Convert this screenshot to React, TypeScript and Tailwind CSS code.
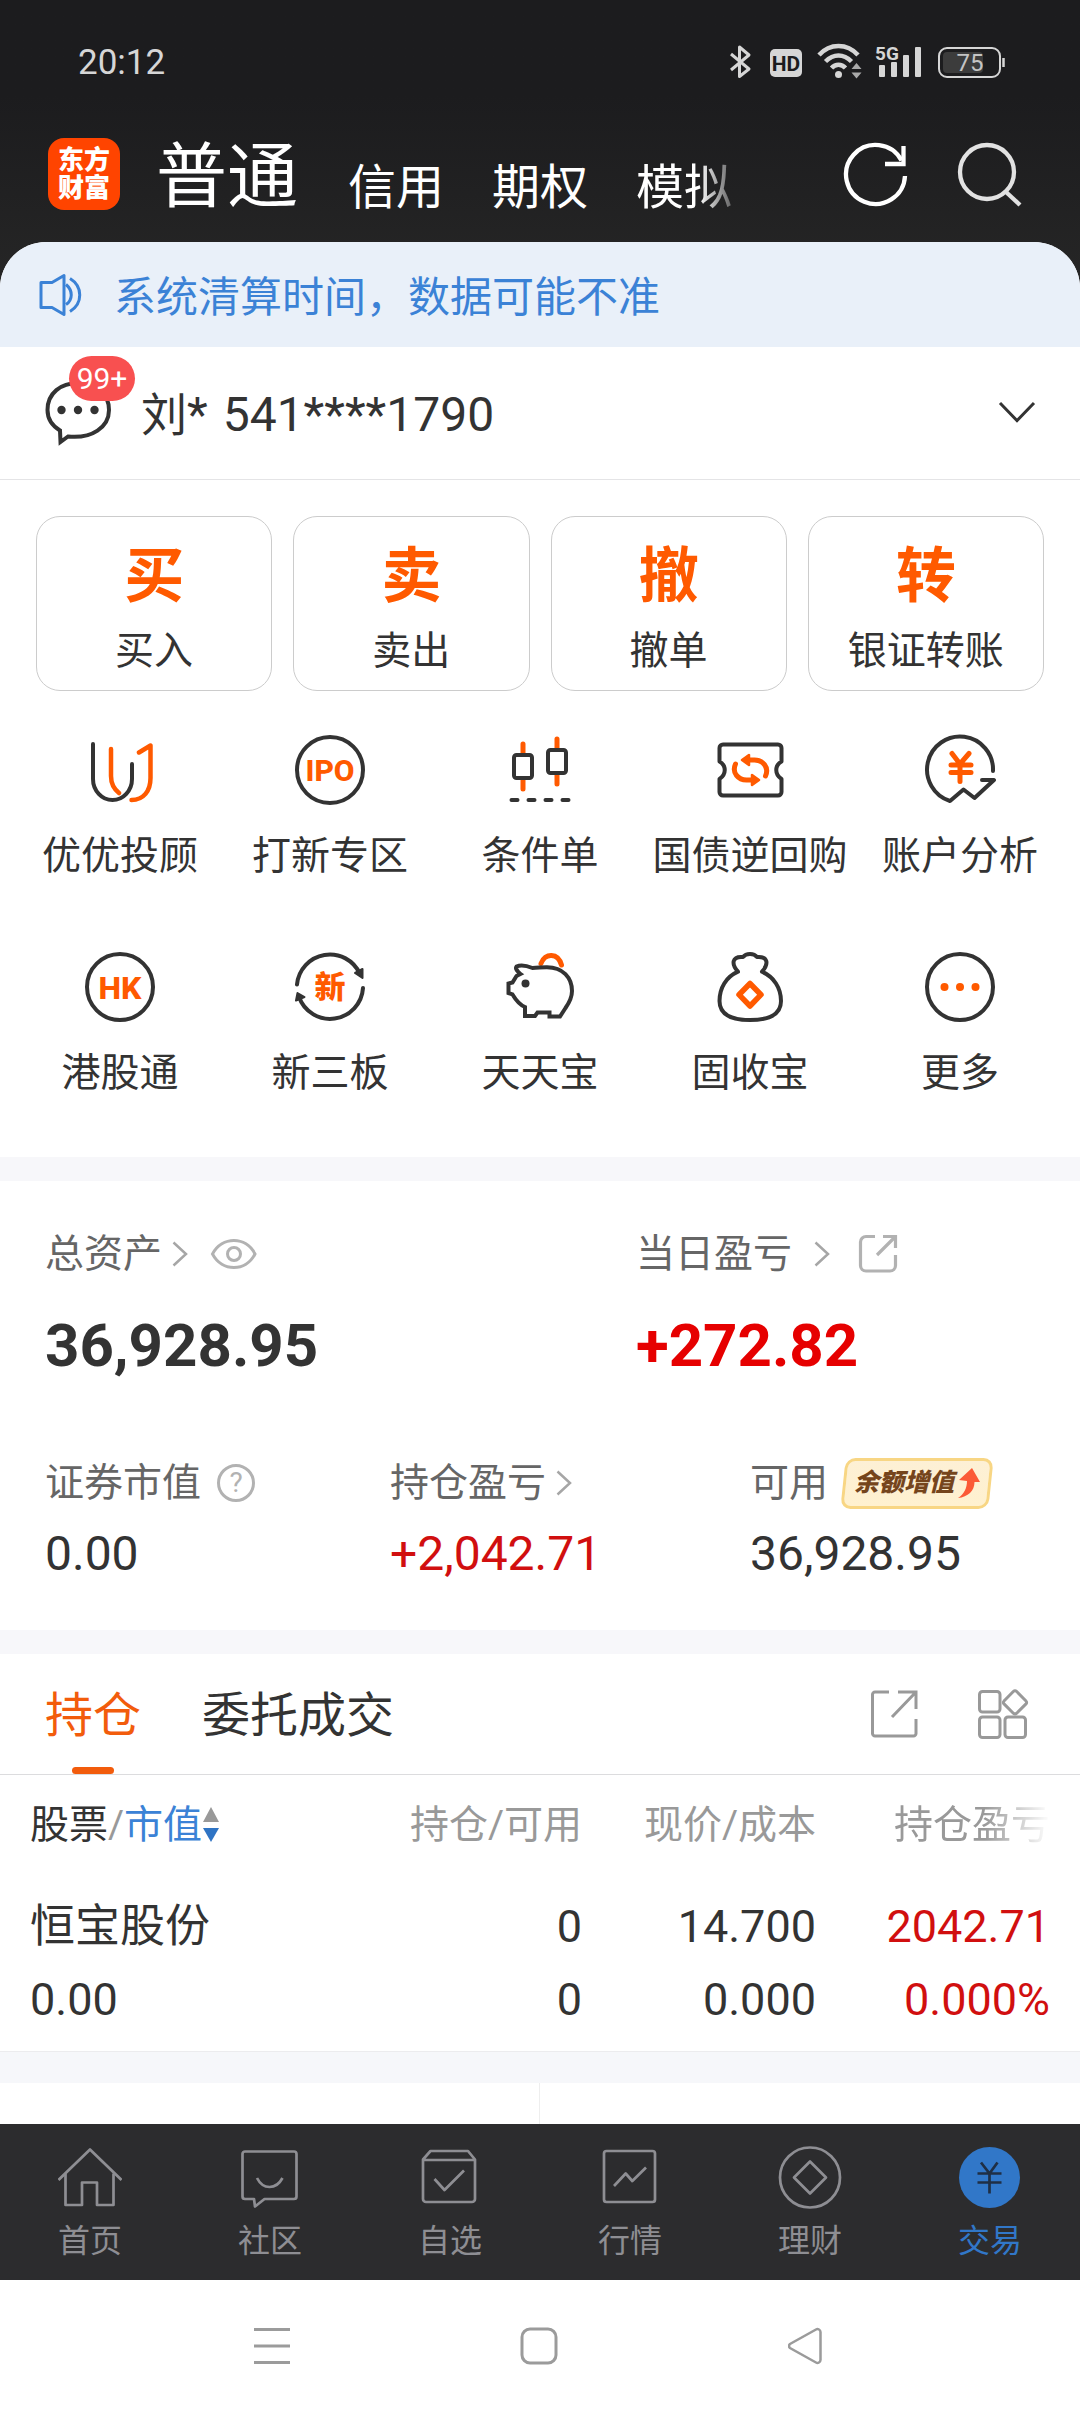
import { useState, type ReactNode } from "react";

const DARK = "#333333";
const ORANGE = "#ff5a00";

const quotes = [
  { mark: "买", label: "买入" },
  { mark: "卖", label: "卖出" },
  { mark: "撤", label: "撤单" },
  { mark: "转", label: "银证转账" },
];

function GridIcon({ children }: { children: ReactNode }) {
  return (
    <svg
      viewBox="0 0 72 72"
      className="size-[72px]"
      fill="none"
      stroke={DARK}
      strokeWidth="4"
      strokeLinecap="round"
      strokeLinejoin="round"
      aria-hidden="true"
    >
      {children}
    </svg>
  );
}

const services: { label: string; icon: ReactNode }[] = [
  {
    label: "优优投顾",
    icon: (
      <GridIcon>
        <path d="M9 10V45a19.5 21 0 0 0 39 0V30" />
        <g stroke={ORANGE} strokeWidth="4.5">
          <path d="M27 15V42c0 7 3 13 8 17" />
          <path d="M55 18.5l11.5-7V44c0 13-7 22-19 22" />
        </g>
      </GridIcon>
    ),
  },
  {
    label: "打新专区",
    icon: (
      <GridIcon>
        <circle cx="36" cy="36" r="33" />
        <text
          x="36"
          y="46.5"
          textAnchor="middle"
          fontSize="30"
          fontWeight="800"
          fill={ORANGE}
          stroke="none"
        >
          IPO
        </text>
      </GridIcon>
    ),
  },
  {
    label: "条件单",
    icon: (
      <GridIcon>
        <g stroke={ORANGE} strokeWidth="5">
          <path d="M19 10v10M19 46v9M53 5v10M53 40v10" />
        </g>
        <rect x="10" y="21" width="18" height="23" rx="2.5" fill="#fff" />
        <rect x="44" y="16" width="18" height="23" rx="2.5" fill="#fff" />
        <path d="M7.500 66h6M24.500 66h6M41.500 66h6M58.500 66h6" />
      </GridIcon>
    ),
  },
  {
    label: "国债逆回购",
    icon: (
      <GridIcon>
        <path d="M9 10.500H64a3.500 3.500 0 0 1 3.500 3.500V27.500c-7 4-7 13 0 17.500V58a3.500 3.500 0 0 1-3.500 3.500H9A3.500 3.500 0 0 1 5.500 58V45c7-4.500 7-13.500 0-17.500V14A3.500 3.500 0 0 1 9 10.500z" />
        <g stroke={ORANGE} strokeWidth="5">
          <path d="M21.500 30c-4 9 3 16 11 16h5M51.500 42c4-9-3-16-11-16h-5" />
          <path
            d="M38 41v10l7-5zM35 21v10l-7-5z"
            fill={ORANGE}
            strokeWidth="2.5"
          />
        </g>
      </GridIcon>
    ),
  },
  {
    label: "账户分析",
    icon: (
      <GridIcon>
        <path d="M69 37A33 33 0 1 0 26 67L39.500 55.500 50.500 64 70 46H58" />
        <path
          d="M28 19.500l8 10.500 9-10.500M36 31v16.500M27 31h20M27 38.500h20"
          stroke={ORANGE}
          strokeWidth="5"
        />
      </GridIcon>
    ),
  },
  {
    label: "港股通",
    icon: (
      <GridIcon>
        <circle cx="36" cy="36" r="33" />
        <text
          x="36"
          y="47.5"
          textAnchor="middle"
          fontSize="32"
          fontWeight="800"
          fill={ORANGE}
          stroke="none"
        >
          HK
        </text>
      </GridIcon>
    ),
  },
  {
    label: "新三板",
    icon: (
      <GridIcon>
        <path d="M3 33.500A33 33 0 0 1 66 23M69 37A33 33 0 0 1 5 46" />
        <path
          d="M61 22l7.500-4V27zM3.500 42l7 4L2 49.500z"
          fill={DARK}
          strokeWidth="2"
        />
        <text
          x="36"
          y="47"
          textAnchor="middle"
          fontSize="31"
          fontWeight="900"
          fill={ORANGE}
          stroke="none"
        >
          新
        </text>
      </GridIcon>
    ),
  },
  {
    label: "天天宝",
    icon: (
      <GridIcon>
        <path
          d="M37 12.500c4-11 17-11 20.500 1.500"
          stroke={ORANGE}
          strokeWidth="5"
        />
        <path
          d="M16.500 23c-4-3-5-6-4-7.500 4-2 10-1 16 1.500 5 0 9-.8 14-.8C59 16 68 27 68 40c0 6-3 12-6.500 17L56 65.500H45.500v-4h-12L31 65H21v-9c-5-2-8-5-12.500-12.500L4.500 42V32.500l4-1 4-6.500z"
          strokeLinejoin="miter"
        />
        <circle cx="21.500" cy="32.500" r="4" fill={DARK} stroke="none" />
      </GridIcon>
    ),
  },
  {
    label: "固收宝",
    icon: (
      <GridIcon>
        <path d="M24 20.700C17 13 18 5 29 6c3-4 11-4 14 0 11-1 12 7 5 14.700C60 26 67 37 67 50 67 62 58 69 36 69S5.500 62 5.500 50C5.500 37 12 26 24 20.700z" />
        <path
          d="M36 32.500L47 43.700 36 55 25 43.700z"
          stroke={ORANGE}
          strokeWidth="5.5"
        />
      </GridIcon>
    ),
  },
  {
    label: "更多",
    icon: (
      <GridIcon>
        <circle cx="36" cy="36" r="33" />
        <g fill={ORANGE} stroke="none">
          <circle cx="20.500" cy="36" r="4" />
          <circle cx="36" cy="36" r="4" />
          <circle cx="51.500" cy="36" r="4" />
        </g>
      </GridIcon>
    ),
  },
];

function NavIcon({ children }: { children: ReactNode }) {
  return (
    <svg
      viewBox="0 0 64 64"
      className="size-16"
      fill="none"
      stroke="currentColor"
      strokeWidth="2.7"
      strokeLinejoin="round"
      aria-hidden="true"
    >
      {children}
    </svg>
  );
}

const navItems: { label: string; active?: boolean; icon: ReactNode }[] = [
  {
    label: "首页",
    icon: (
      <NavIcon>
        <path d="M.500 35L32 4.500 63.500 35" />
        <path d="M7.500 28.500V60H24V37.500H39V60H55.500V28.500" />
      </NavIcon>
    ),
  },
  {
    label: "社区",
    icon: (
      <NavIcon>
        <path d="M7 6.500H56a2.500 2.500 0 0 1 2.500 2.500V51.500A2.500 2.500 0 0 1 56 54H26.500L17 61.500 16 54H7a2.500 2.500 0 0 1-2.500-2.500V9A2.500 2.500 0 0 1 7 6.500z" />
        <path d="M19 33c6 12 19 12 25.500 0" />
      </NavIcon>
    ),
  },
  {
    label: "自选",
    icon: (
      <NavIcon>
        <path d="M5 14.500L12.500 6H50l7 8.500V54a3 3 0 0 1-3 3H8a3 3 0 0 1-3-3zM5 15H57" />
        <path d="M16.500 34L26.500 45 46 25.500" />
      </NavIcon>
    ),
  },
  {
    label: "行情",
    icon: (
      <NavIcon>
        <rect x="6" y="6" width="51" height="51" rx="2.5" />
        <path d="M16 41L27.700 28.500 34.300 36 48 22.500" />
      </NavIcon>
    ),
  },
  {
    label: "理财",
    icon: (
      <NavIcon>
        <circle cx="32" cy="32.500" r="30" />
        <path d="M32 16.500L48 32.500 32 48.500 16 32.500z" />
      </NavIcon>
    ),
  },
  {
    label: "交易",
    active: true,
    icon: (
      <NavIcon>
        <circle cx="31.500" cy="32.500" r="30.500" fill="currentColor" stroke="none" />
        <path
          d="M23 17.500l8.500 11 8-11M31.500 28V48.500M19.500 28.500h24M19.500 37.500h24"
          stroke="#1f2f45"
        />
      </NavIcon>
    ),
  },
];

function StatusBar() {
  return (
    <div className="flex h-[106px] items-center justify-between pt-[18px] pr-[74px] pl-[78px] text-[#d6d6d6]">
      <span className="pt-0.5 text-[35px] leading-10">20:12</span>
      <svg
        viewBox="0 0 278 38"
        className="h-[38px] w-[278px]"
        fill="none"
        stroke="#d6d6d6"
        aria-hidden="true"
      >
        <path
          d="M3 11L21 26l-9.500 7.500V4L21 12 3 27"
          strokeWidth="3"
          strokeLinejoin="round"
        />
        <rect x="42" y="6" width="32" height="28" rx="5" fill="#d6d6d6" stroke="none" />
        <text x="58" y="28" textAnchor="middle" fontSize="21" fontWeight="700" fill="#1c1c1e" stroke="none">
          HD
        </text>
        <g strokeWidth="4.5">
          <path d="M91 12c11-12 28-12 39 0M97.500 18.500c8-8 18-8 26 0M103.500 25c4-4.500 10-4.500 14 0" />
        </g>
        <circle cx="110.500" cy="31.500" r="3.500" fill="#d6d6d6" stroke="none" />
        <path d="M123.500 26l5-6 5 6zM123.500 29.500l5 6 5-6z" fill="#a9a9a9" stroke="none" />
        <text x="159" y="17" textAnchor="middle" fontSize="19" fontWeight="700" fill="#d6d6d6" stroke="none">
          5G
        </text>
        <g fill="#d6d6d6" stroke="none">
          <rect x="151" y="22" width="6" height="12" rx="1" />
          <rect x="163" y="19" width="6" height="15" rx="1" />
          <rect x="175" y="12" width="6" height="22" rx="1" />
          <rect x="187" y="4" width="6" height="30" rx="1" />
        </g>
        <rect x="211" y="5" width="61" height="29" rx="8" strokeWidth="2" />
        <rect x="215" y="9" width="40" height="21" rx="4" fill="#3c3c3c" stroke="none" />
        <path d="M275.500 15v9" strokeWidth="2.5" />
        <text x="242" y="28" textAnchor="middle" fontSize="24" fill="#c4c4c4" stroke="none">
          75
        </text>
      </svg>
    </div>
  );
}

function Header() {
  return (
    <header className="flex h-[136px] items-center pr-[54px] pl-12 text-white">
      <a
        href="#home"
        className="flex size-[72px] flex-col items-center justify-center rounded-2xl bg-[#ff4400] text-[26px] leading-7 font-black"
      >
        <span>东方</span>
        <span>财富</span>
      </a>
      <nav className="mt-1.5 ml-9 flex flex-1 items-end gap-12">
        <a href="#normal" className="mr-0.5 text-[71px] leading-[72px]">
          普通
        </a>
        <a href="#credit" className="text-[48px] leading-[50px]">
          信用
        </a>
        <a href="#option" className="text-[48px] leading-[50px]">
          期权
        </a>
        <a
          href="#mock"
          className="text-[48px] leading-[50px] [mask-image:linear-gradient(to_right,black_65%,transparent_115%)]"
        >
          模拟
        </a>
      </nav>
      <div className="flex gap-11 pt-px">
        <button aria-label="刷新">
          <svg viewBox="0 0 70 70" className="size-[70px]" fill="none" stroke="currentColor" strokeWidth="4.3">
            <path d="M63 36A29.500 29.500 0 1 1 59.500 20.500" />
            <path d="M61.500 6V24H43" />
          </svg>
        </button>
        <button aria-label="搜索" className="text-[#e2e2e2]">
          <svg viewBox="0 0 70 70" className="size-[70px]" fill="none" stroke="currentColor" strokeWidth="4.3">
            <circle cx="31" cy="32" r="27" />
            <path d="M50 52L64 65" />
          </svg>
        </button>
      </div>
    </header>
  );
}

function Notice() {
  return (
    <div className="flex h-[105px] items-center gap-[30px] bg-[#e9f0f9] pl-[38px] text-[#3b82d6]">
      <svg viewBox="0 0 46 48" className="h-12 w-[46px]" fill="none" stroke="currentColor" strokeWidth="3" strokeLinejoin="round" aria-hidden="true">
        <path d="M3 11.500H14L26 4.500V43.500L14 36.500H3z" />
        <path d="M28 13.500c7 6 7 15 0 20M32 7.500c13 8 13 25 0 33" />
      </svg>
      <p className="pt-1.5 text-[42px] leading-[50px]">系统清算时间，数据可能不准</p>
    </div>
  );
}

function Account() {
  return (
    <div className="flex h-[133px] items-center border-b border-[#e4e4e6] pr-[44px] pl-[42px] text-[#333]">
      <button aria-label="消息" className="relative">
        <svg viewBox="0 0 72 68" className="h-[68px] w-[72px]" fill="none" stroke="currentColor" strokeWidth="4" aria-hidden="true">
          <path d="M18 51.500C9 46 5.500 39 5.500 31 5.500 14 19 4 36 4s31 10 31 27-17 29-41 26.500L18.500 63z" />
          <g fill="currentColor" stroke="none">
            <circle cx="19.500" cy="31" r="4.2" />
            <circle cx="36" cy="31" r="4.2" />
            <circle cx="52.500" cy="31" r="4.2" />
          </g>
        </svg>
        <span className="absolute -top-[23px] left-[27px] flex h-[45px] w-[66px] items-center justify-center rounded-full bg-[#f85050] text-[30px] leading-10 text-white">
          99+
        </span>
      </button>
      <div className="ml-[27px] flex flex-1 items-baseline gap-[15px] pt-1 text-[48px] leading-[50px]">
        <span>
          <span className="text-[46px]">刘</span>*
        </span>
        <span>541****1790</span>
      </div>
      <button aria-label="切换账户">
        <svg viewBox="0 0 38 24" className="h-6 w-[38px]" fill="none" stroke="currentColor" strokeWidth="3">
          <path d="M2 2L19 19.500 36 2" />
        </svg>
      </button>
    </div>
  );
}

function Arrow() {
  return (
    <svg viewBox="0 0 16 26" className="h-[26px] w-4" fill="none" stroke="#a6a6a6" strokeWidth="2.5" aria-hidden="true">
      <path d="M1.500 1.500L14 13 1.500 24.500" />
    </svg>
  );
}

function Assets() {
  return (
    <section className="bg-white pt-[53px] pb-[51px] pl-[45px] text-[#333]">
      <div className="grid grid-cols-[591fr_444fr]">
        <div>
          <div className="flex h-10 items-center text-[39px] leading-10 text-[#666]">
            <a href="#assets" className="flex items-center gap-[10px]">
              总资产
              <Arrow />
            </a>
            <button aria-label="隐藏金额" className="ml-[22px]">
              <svg viewBox="0 0 48 32" className="h-8 w-12" fill="none" stroke="#b2b2b2" strokeWidth="3">
                <path d="M2.500 16C12-2 36-2 45 16 36 34 12 34 2.500 16z" />
                <circle cx="24" cy="16" r="6.5" />
              </svg>
            </button>
          </div>
          <p className="mt-[42px] text-[60px] leading-[60px] font-bold">36,928.95</p>
        </div>
        <div>
          <div className="flex h-10 items-center text-[39px] leading-10 text-[#666]">
            <a href="#today" className="flex items-center gap-[22px]">
              当日盈亏
              <Arrow />
            </a>
            <button aria-label="分享" className="ml-7">
              <svg viewBox="0 0 40 40" className="size-10" fill="none" stroke="#b2b2b2" strokeWidth="3.2">
                <path d="M17 2.500H8A5.500 5.500 0 0 0 2.500 8V31.500A5.500 5.500 0 0 0 8 37H32A5.500 5.500 0 0 0 37.500 31.500V21" />
                <path d="M25 2.500H37.500V14M37 3L19 21" />
              </svg>
            </button>
          </div>
          <p className="mt-[42px] text-[60px] leading-[60px] font-bold text-[#e60000]">+272.82</p>
        </div>
      </div>
      <div className="mt-[87px] grid grid-cols-[345fr_360fr_330fr] text-[48px] leading-[50px]">
        <div>
          <div className="flex h-10 items-center gap-4 text-[39px] leading-10 text-[#666]">
            证券市值
            <button
              aria-label="说明"
              className="flex size-[38px] items-center justify-center rounded-full border-3 border-[#b2b2b2] text-[28px] leading-8 text-[#b2b2b2]"
            >
              ?
            </button>
          </div>
          <p className="mt-[26px]">0.00</p>
        </div>
        <div>
          <a href="#profit" className="flex h-10 items-center gap-[10px] text-[39px] leading-10 text-[#666]">
            持仓盈亏
            <Arrow />
          </a>
          <p className="mt-[26px] text-[#d10f0f]">+2,042.71</p>
        </div>
        <div>
          <div className="flex h-10 items-center gap-[15px] text-[39px] leading-10 text-[#666]">
            可用
            <a
              href="#gain"
              className="relative flex h-[51px] w-[148px] items-center justify-center gap-1 text-[25px] leading-8 font-black text-[#75451c] italic"
            >
              <span className="absolute inset-0 -skew-x-6 rounded-[10px] border-3 border-[#f8d684] bg-linear-to-b from-[#fdf0d5] to-[#fff1cf]" />
              <span className="relative">余额增值</span>
              <svg viewBox="0 0 22 30" className="relative h-[30px] w-[22px]" fill="#fb5a36" aria-hidden="true">
                <path d="M14 0L22 14H16.500C16.500 23 10 29 0 30 6 26 9 20 9 13L1 12z" />
              </svg>
            </a>
          </div>
          <p className="mt-[26px]">36,928.95</p>
        </div>
      </div>
    </section>
  );
}

const tabs = ["持仓", "委托成交"];

function Holdings() {
  const [tab, setTab] = useState(tabs[0]);
  return (
    <section className="bg-white text-[#333]">
      <div className="flex h-[121px] items-center border-b border-[#dcdcde] pr-[50px] pl-[45px]">
        <div role="tablist" className="flex flex-1 gap-[61px] self-stretch">
          {tabs.map((t) => (
            <button
              key={t}
              role="tab"
              aria-selected={t === tab}
              onClick={() => setTab(t)}
              className={
                t === tab
                  ? "relative pt-1 text-[48px] leading-[50px] text-[#f25c0c]"
                  : "relative pt-1 text-[48px] leading-[50px]"
              }
            >
              {t}
              {t === tab && (
                <span className="absolute bottom-0 left-1/2 h-[7px] w-[42px] -translate-x-1/2 rounded-full bg-[#f25c0c]" />
              )}
            </button>
          ))}
        </div>
        <div className="flex items-center gap-[58px] text-[#999]">
          <button aria-label="分享持仓">
            <svg viewBox="0 0 50 50" className="size-[50px]" fill="none" stroke="currentColor" strokeWidth="3">
              <path d="M19 3H5A2.500 2.500 0 0 0 2.500 5.500V44.500A2.500 2.500 0 0 0 5 47H43.500A2.500 2.500 0 0 0 46 44.500V30" />
              <path d="M28 3H46V20M45.500 3.500L22 28" />
            </svg>
          </button>
          <button aria-label="更多功能">
            <svg viewBox="0 0 52 52" className="size-[52px]" fill="none" stroke="currentColor" strokeWidth="3">
              <rect x="1.500" y="3.500" width="20.500" height="20.500" rx="3" />
              <rect x="1.500" y="29" width="20.500" height="20.500" rx="3" />
              <rect x="27" y="29" width="20.500" height="20.500" rx="3" />
              <path d="M35.300 3.500a2.500 2.500 0 0 1 3.400 0L48 13a2 2 0 0 1 0 2.900l-9.300 9.300a2.500 2.500 0 0 1-3.400 0L26 15.900a2 2 0 0 1 0-2.900z" />
            </svg>
          </button>
        </div>
      </div>
      <div className="px-[30px]">
        <table className="w-full table-fixed text-right">
          <colgroup>
            <col />
            <col className="w-[234px]" />
            <col className="w-[234px]" />
            <col className="w-[234px]" />
          </colgroup>
          <thead>
            <tr className="h-[100px] text-[39px] leading-10 text-[#999]">
              <th className="text-left font-normal">
                <button className="flex items-center">
                  <span className="text-[#333]">股票</span>/<span className="text-[#3b82d6]">市值</span>
                  <svg viewBox="0 0 18 36" className="h-9 w-[18px]" aria-hidden="true">
                    <path d="M9 0l8 15H1z" fill="#999" />
                    <path d="M9 35l8-14H1z" fill="#2f74c4" />
                  </svg>
                </button>
              </th>
              <th className="font-normal whitespace-nowrap">持仓/可用</th>
              <th className="font-normal whitespace-nowrap">现价/成本</th>
              <th className="font-normal whitespace-nowrap [mask-image:linear-gradient(to_right,black_72%,transparent)]">
                持仓盈亏
              </th>
            </tr>
          </thead>
          <tbody>
            <tr className="text-[45px] leading-[73px]">
              <td className="pt-[15px] pb-[15px] text-left">
                <div>恒宝股份</div>
                <div>0.00</div>
              </td>
              <td className="pt-[15px] pb-[15px]">
                <div>0</div>
                <div>0</div>
              </td>
              <td className="pt-[15px] pb-[15px]">
                <div>14.700</div>
                <div>0.000</div>
              </td>
              <td className="pt-[15px] pb-[15px] text-[#d10f0f]">
                <div>2042.71</div>
                <div>0.000%</div>
              </td>
            </tr>
          </tbody>
        </table>
      </div>
    </section>
  );
}

function BottomNav() {
  return (
    <nav className="grid h-[156px] grid-cols-6 bg-[#2c2c2e] pt-[21px]">
      {navItems.map((n) => (
        <a
          key={n.label}
          href={`#${n.label}`}
          className={
            n.active
              ? "flex flex-col items-center gap-4 text-[#3177c8]"
              : "flex flex-col items-center gap-4 text-[#8e8e93]"
          }
        >
          {n.icon}
          <span className="text-[32px] leading-8">{n.label}</span>
        </a>
      ))}
    </nav>
  );
}

function SystemKeys() {
  return (
    <div className="flex h-[132px] items-center justify-around bg-white px-[138px] text-[#9b9b9b]">
      <button aria-label="最近任务">
        <svg viewBox="0 0 40 40" className="size-10" fill="none" stroke="currentColor" strokeWidth="3">
          <path d="M2 3.500H38M2 20H38M2 36.500H38" />
        </svg>
      </button>
      <button aria-label="主屏幕">
        <svg viewBox="0 0 40 40" className="size-10" fill="none" stroke="currentColor" strokeWidth="3">
          <rect x="2" y="3" width="34" height="34" rx="8" />
        </svg>
      </button>
      <button aria-label="返回">
        <svg viewBox="0 0 40 40" className="size-10" fill="none" stroke="currentColor" strokeWidth="2.5">
          <path d="M2 18a2.500 2.500 0 0 0 0 4L28 36.500a3 3 0 0 0 4.500-2.500V6A3 3 0 0 0 28 3.500z" />
        </svg>
      </button>
    </div>
  );
}

export default function App() {
  return (
    <div className="flex min-h-screen flex-col bg-white font-['Roboto','Noto_Sans_CJK_SC',sans-serif]">
      <div className="bg-linear-to-b from-[#1c1c1e] from-20% to-[#262626] to-60%">
        <StatusBar />
        <Header />
        <div className="overflow-hidden rounded-t-[46px] bg-white">
          <Notice />
          <Account />
        </div>
      </div>

      <section className="bg-white pt-9 pb-16 text-[#333]">
        <div className="grid grid-cols-4 gap-[21px] px-9">
          {quotes.map((q) => (
            <button
              key={q.label}
              className="flex h-[175px] flex-col items-center rounded-3xl border border-[#cccccc] pt-[30px]"
            >
              <span className="text-[60px] leading-[60px] font-bold text-[#ff5a00]">{q.mark}</span>
              <span className="mt-6 text-[39px] leading-10">{q.label}</span>
            </button>
          ))}
        </div>
        <div className="mt-[43px] grid grid-cols-5 gap-y-[75px] px-[15px]">
          {services.map((s) => (
            <a key={s.label} href={`#${s.label}`} className="flex flex-col items-center gap-[30px]">
              {s.icon}
              <span className="text-[39px] leading-10 whitespace-nowrap">{s.label}</span>
            </a>
          ))}
        </div>
      </section>

      <div className="h-6 bg-[#f7f7fa]" />
      <Assets />
      <div className="h-6 bg-[#f7f7fa]" />
      <Holdings />
      <div className="h-8 border-t border-[#ececee] bg-[#f6f7fa]" />

      <div className="grid min-h-10 flex-1 grid-cols-2 bg-white">
        <div className="border-r border-[#eeeeee]" />
      </div>
      <BottomNav />
      <SystemKeys />
    </div>
  );
}
